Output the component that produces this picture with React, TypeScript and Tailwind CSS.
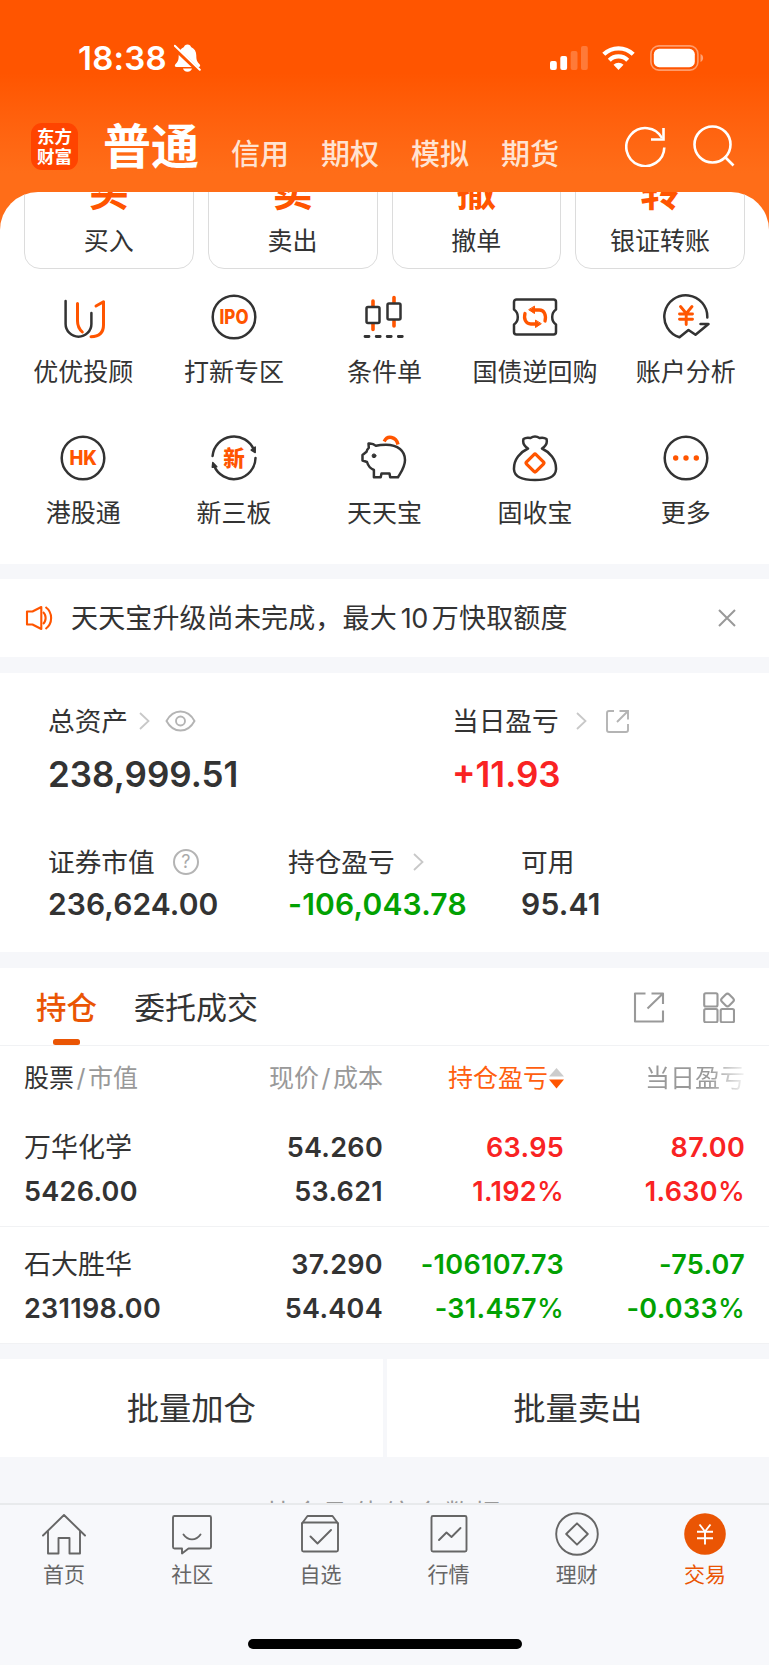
import type { ReactNode } from "react";

const quickActions = [
  { glyph: "买", label: "买入" },
  { glyph: "卖", label: "卖出" },
  { glyph: "撤", label: "撤单" },
  { glyph: "转", label: "银证转账" },
];

const accountTabs = ["信用", "期权", "模拟", "期货"];

const DARK = "#333333";
const ORANGE = "#ff5500";

function ServiceIcon({ children }: { children: ReactNode }) {
  return (
    <svg
      className="size-12"
      viewBox="0 0 48 48"
      fill="none"
      stroke={DARK}
      strokeWidth="2.5"
      strokeLinecap="round"
      strokeLinejoin="round"
      aria-hidden="true"
    >
      {children}
    </svg>
  );
}

const services: { label: string; icon: ReactNode }[] = [
  {
    label: "优优投顾",
    icon: (
      <>
        <path d="M6.6 8v23a12.900 12.700 0 0 0 25.800 0V20" />
        <path d="M18.500 10.500V28c0 4.500 1.500 8 4.800 11" stroke={ORANGE} strokeWidth="3" />
        <path d="M37 13l7.500-4.200V32c0 7-4 11.500-12.500 11.700" stroke={ORANGE} strokeWidth="3" />
      </>
    ),
  },
  {
    label: "打新专区",
    icon: (
      <>
        <circle cx="24" cy="24" r="21.300" />
        <text x="9.500" y="31" textLength="29" lengthAdjust="spacingAndGlyphs" fontSize="19.500" fontWeight="800" fill={ORANGE} stroke="none">
          IPO
        </text>
      </>
    ),
  },
  {
    label: "条件单",
    icon: (
      <>
        <path d="M13 8v5M13 31v5.500M34 4.500v5M34 28v5" stroke={ORANGE} strokeWidth="3.600" />
        <rect x="6.500" y="14" width="13" height="16" rx="1.500" />
        <rect x="27.500" y="10.500" width="13" height="16" rx="1.500" />
        <path d="M5 43.500h4M16.200 43.500h4M27.200 43.500h4M38.300 43.500h4" strokeWidth="2.800" />
      </>
    ),
  },
  {
    label: "国债逆回购",
    icon: (
      <>
        <path d="M5.500 6.500h37a2.500 2.500 0 0 1 2.500 2.500v7.500a9 9 0 0 0-3.800 7.500 9 9 0 0 0 3.800 7.500V39a2.500 2.500 0 0 1-2.500 2.500h-37A2.500 2.500 0 0 1 3 39v-7.500a9 9 0 0 0 3.800-7.500A9 9 0 0 0 3 16.500V9a2.500 2.500 0 0 1 2.500-2.500z" />
        <path d="M14 20.500c-1.500 5.500.8 10.500 5.800 10.500h5.700M34 28c1.500-6-.8-11-5.800-11h-5.700" stroke={ORANGE} strokeWidth="3.300" />
        <path d="M23.500 13.500v7l-5.500-3.600zM24.500 27.500v7l5.500-3.600z" fill={ORANGE} stroke={ORANGE} strokeWidth="1" />
      </>
    ),
  },
  {
    label: "账户分析",
    icon: (
      <>
        <path d="M45.300 24.500A21.500 21.500 0 1 0 17.500 44.300L26.500 37l7 4.800L46.500 31H38.500" />
        <path d="M18.500 13.500l5.800 7 5.700-7M17.500 21h13M17.500 26.300h13M24.200 21v10.500" stroke={ORANGE} strokeWidth="2.900" />
      </>
    ),
  },
  {
    label: "港股通",
    icon: (
      <>
        <circle cx="24" cy="24" r="21.300" />
        <text x="10.500" y="31.200" textLength="27.500" lengthAdjust="spacingAndGlyphs" fontSize="20" fontWeight="800" fill={ORANGE} stroke="none">
          HK
        </text>
      </>
    ),
  },
  {
    label: "新三板",
    icon: (
      <>
        <path d="M2.600 22A21.500 21.500 0 0 1 44 16" />
        <path d="M45.500 24A21.500 21.500 0 0 1 4 31.500" />
        <path d="M45.200 13v5.500l-4-2.500zM2.800 28.500l4 4.200-4.500.5z" fill={DARK} strokeWidth="1.500" />
        <text x="24" y="31.500" textAnchor="middle" fontSize="21.500" fontWeight="800" fill={ORANGE} stroke="none">
          新
        </text>
      </>
    ),
  },
  {
    label: "天天宝",
    icon: (
      <>
        <path d="M8.500 9.500c3-.3 5.200.2 7.500 2.300 3-.8 6-1 10-1C38 10.800 45 17 45 26c0 7-3.500 11.500-7 17.300h-7.800l-.7-3.800h-8l-.8 3.800h-6.800v-7.300C9.700 34.200 8 31.500 7 28l-4.500-1.500V21l4-3.200c.3-1.600 1-2.800 2.300-3.900z" />
        <circle cx="14" cy="21.800" r="1.900" fill={DARK} strokeWidth="1" />
        <path d="M24.200 7.500c3.200-6.800 12-4.800 13.800 3" stroke={ORANGE} strokeWidth="3.400" strokeLinecap="butt" />
      </>
    ),
  },
  {
    label: "固收宝",
    icon: (
      <>
        <path d="M17 14.500c-3.800-2.500-5.500-6-4.500-9.500 2-1.500 4.500-1.500 7-1 2.700-1.900 6.300-1.900 9 0 2.500-.5 5-.5 7 1 1 3.500-.7 7-4.500 9.500 7.500 3.500 14.500 11 14 21C44.500 43.500 35 46 24 46S3.500 43.500 3 35.500c-.5-10 6.500-17.500 14-21" />
        <rect x="17.300" y="22.300" width="13.400" height="13.400" rx="1.500" transform="rotate(45 24 29)" stroke={ORANGE} strokeWidth="3.200" />
      </>
    ),
  },
  {
    label: "更多",
    icon: (
      <>
        <circle cx="24" cy="24" r="21.300" />
        <g fill={ORANGE} stroke="none">
          <circle cx="13.700" cy="24" r="2.700" />
          <circle cx="24" cy="24" r="2.700" />
          <circle cx="34.300" cy="24" r="2.700" />
        </g>
      </>
    ),
  },
];

const holdings = [
  {
    name: "万华化学",
    marketValue: "5426.00",
    price: "54.260",
    cost: "53.621",
    profit: "63.95",
    profitRate: "1.192",
    dayProfit: "87.00",
    dayRate: "1.630",
    up: true,
  },
  {
    name: "石大胜华",
    marketValue: "231198.00",
    price: "37.290",
    cost: "54.404",
    profit: "-106107.73",
    profitRate: "-31.457",
    dayProfit: "-75.07",
    dayRate: "-0.033",
    up: false,
  },
];

const bottomTabs: { label: string; icon: ReactNode }[] = [
  {
    label: "首页",
    icon: <path d="M3 24.500L24 4l21 20.500M8 20v22.500h10.500V27h11v15.500H40V20" />,
  },
  {
    label: "社区",
    icon: (
      <>
        <path d="M6.500 5h35a1.500 1.500 0 0 1 1.500 1.500v29.500a1.500 1.500 0 0 1-1.500 1.500H20.500L14 42.500v-5H6.500A1.500 1.500 0 0 1 5 36V6.500A1.500 1.500 0 0 1 6.500 5z" />
        <path d="M15.500 23.500c4.500 6.500 12.500 6.500 17 0" />
      </>
    ),
  },
  {
    label: "自选",
    icon: (
      <>
        <rect x="6" y="11.500" width="36" height="29" rx="1.500" />
        <path d="M6 12.500L11.500 5h25l5.500 7.500M14.500 25.500l7 7L35 19" />
      </>
    ),
  },
  {
    label: "行情",
    icon: (
      <>
        <rect x="6.500" y="5" width="35" height="35.500" rx="1.500" />
        <path d="M14 29l7.500-7.500 5 4.500 9-9" />
      </>
    ),
  },
  {
    label: "理财",
    icon: (
      <>
        <circle cx="24" cy="23" r="20.800" />
        <path d="M24 12.300L34.800 23 24 33.700 13.200 23z" />
      </>
    ),
  },
  {
    label: "交易",
    icon: (
      <>
        <circle cx="24" cy="23" r="20.800" fill="#ea5504" stroke="none" />
        <path d="M18.500 13.500L24 20.500l5.500-7M16 20.800h16M16 27.300h16M24 20.500v13" stroke="#ffffff" strokeWidth="1.900" strokeLinecap="butt" />
      </>
    ),
  },
];

function StatusBar() {
  return (
    <div className="flex h-[115px] items-center pl-[78px] pr-[65px] text-white">
      <span className="text-[33px] leading-10 font-semibold tracking-[0.2px]">18:38</span>
      <svg className="ml-[7px] h-[28px] w-[27px]" viewBox="0 0 27 28" fill="none" aria-hidden="true">
        <path
          d="M13.500 0.500c2 0 3.200 1 3.500 2.500 3.500 1.500 5.300 4.500 5.300 8.500 0 5 1 6.500 3.500 9 .8 1.200.3 2.500-1.300 2.500H2.500c-1.600 0-2.100-1.300-1.300-2.500 2.500-2.500 3.500-4 3.500-9 0-4 1.800-7 5.300-8.500.3-1.500 1.500-2.500 3.500-2.500zM9 24.500h9c-.5 2-2 3.200-4.500 3.200S9.500 26.500 9 24.500z"
          fill="#ffffff"
        />
        <path d="M0 3.500L25 27" stroke={ORANGE} strokeWidth="4.500" />
        <path d="M0.800 1.800L25.800 25.800" stroke="#ffffff" strokeWidth="2" strokeLinecap="round" />
      </svg>

      <div className="ml-auto flex items-center">
        <svg className="h-6 w-[38px]" viewBox="0 0 38 24" fill="#ffffff" aria-hidden="true">
          <rect x="0" y="15" width="6.800" height="9" rx="2" />
          <rect x="10.300" y="10" width="6.800" height="14" rx="2" />
          <rect x="20.700" y="5" width="6.800" height="19" rx="2" opacity="0.220" />
          <rect x="31" y="0" width="6.800" height="24" rx="2" opacity="0.220" />
        </svg>
        <svg className="ml-[14px] h-6 w-[33px]" viewBox="0 0 33 24" fill="none" stroke="#ffffff" strokeWidth="4.300" aria-hidden="true">
          <path d="M1.800 8.300a21 21 0 0 1 29.400 0" />
          <path d="M7.300 14.200a13.200 13.200 0 0 1 18.400 0" />
          <path d="M16.500 24l-5-5.200a7.200 7.200 0 0 1 10 0z" fill="#ffffff" stroke="none" />
        </svg>
        <svg className="ml-[15px] h-[26px] w-[54px]" viewBox="0 0 54 26" fill="none" aria-hidden="true">
          <rect x="0.900" y="0.900" width="47" height="24.200" rx="8" stroke="#ffffff" strokeOpacity="0.420" strokeWidth="1.600" />
          <rect x="3.800" y="3.800" width="41" height="18.400" rx="5.500" fill="#ffffff" />
          <path d="M50.500 9v8c1.800-.7 2.600-2.300 2.600-4s-.8-3.300-2.600-4z" fill="#ffffff" fillOpacity="0.450" />
        </svg>
      </div>
    </div>
  );
}

function AppHeader() {
  return (
    <header className="h-[192px] bg-linear-to-b from-[#ff5500] from-38% to-[#ff6d18] to-90%">
      <StatusBar />
      <div className="flex items-start pl-[31px] pr-[34px]">
        <div className="mt-[8px] grid size-[47px] content-center justify-center rounded-[11px] bg-[#ff4400] text-center text-[17.500px] leading-[19.500px] font-bold text-white">
          <span>东方</span>
          <span>财富</span>
        </div>
        <h1 className="ml-[25px] pt-px text-[48px] leading-[62px] font-bold text-white">普通</h1>
        <nav className="ml-[32px] flex gap-[32px] pt-[22px]">
          {accountTabs.map((tab) => (
            <span key={tab} className="text-[29px] leading-9 font-medium text-[#ffe3d2]">
              {tab}
            </span>
          ))}
        </nav>
        <div className="ml-auto flex gap-[26px] pt-[10px]">
          <svg className="size-[42px]" viewBox="0 0 42 42" fill="none" stroke="#ffffff" strokeWidth="2.600" aria-hidden="true">
            <path d="M39.300 22.500A19 19 0 1 1 37 13" />
            <path d="M38.500 3v11.500H26" />
          </svg>
          <svg className="size-[42px]" viewBox="0 0 42 42" fill="none" stroke="#ffffff" strokeWidth="2.600" aria-hidden="true">
            <circle cx="19.500" cy="19.500" r="18" />
            <path d="M31.500 31.500l9 9" />
          </svg>
        </div>
      </div>
    </header>
  );
}

function ServicePanel() {
  return (
    <div className="bg-[#ff6d18]">
      <section className="h-[372px] overflow-hidden rounded-t-[38px] bg-white">
        <div className="-mt-[30px] grid grid-cols-4 gap-[14px] px-6">
          {quickActions.map((action) => (
            <div
              key={action.label}
              className="flex h-[107px] flex-col items-center rounded-[16px] border-[1.500px] border-[#dcdcdc] pt-[7px]"
            >
              <span className="text-[40px] leading-[44px] font-bold text-[#ff5500]">{action.glyph}</span>
              <span className="mt-[11px] text-[25px] leading-8 text-[#333]">{action.label}</span>
            </div>
          ))}
        </div>
        <div className="mt-[24px] grid grid-cols-5 px-2">
          {services.map((service) => (
            <div key={service.label} className="flex h-[141px] flex-col items-center">
              <ServiceIcon>{service.icon}</ServiceIcon>
              <span className="mt-[15px] text-[25px] leading-8 text-[#333]">{service.label}</span>
            </div>
          ))}
        </div>
      </section>
    </div>
  );
}

function Notice() {
  return (
    <section className="mt-[15px] flex h-[78px] items-center bg-white pl-[25px] pr-[33px]">
      <svg className="h-[26px] w-[28px]" viewBox="0 0 28 26" fill="none" stroke={ORANGE} strokeWidth="2.100" strokeLinejoin="round" aria-hidden="true">
        <path d="M2 6.500h5.500L16.300 2v22L7.500 19.500H2z" />
        <path d="M18 7c3.500 3 3.500 9 0 12M20.500 2c7.500 5.500 7.500 16.500 0 22" />
      </svg>
      <p className="ml-[18px] pt-[2px] text-[27px] leading-9 tracking-[0.150px] text-[#333]">
        天天宝升级尚未完成，最大<span className="mx-[4px] tracking-[-0.500px]">10</span>万快取额度
      </p>
      <svg className="ml-auto size-[18px]" viewBox="0 0 18 18" fill="none" stroke="#999999" strokeWidth="2" aria-hidden="true">
        <path d="M1 1l16 16M17 1L1 17" />
      </svg>
    </section>
  );
}

function Chevron() {
  return (
    <svg className="h-[18px] w-[11px]" viewBox="0 0 11 18" fill="none" stroke="#c8c8c8" strokeWidth="1.800" aria-hidden="true">
      <path d="M1 1l8.500 8L1 17" />
    </svg>
  );
}

function AssetSummary() {
  return (
    <section className="mt-4 h-[279px] bg-white px-12 text-[#333]">
      <div className="flex pt-[29px]">
        <div className="w-[404px]">
          <div className="flex h-[38px] items-center text-[26.700px] leading-[38px]">
            <span className="mr-[11px]">总资产</span>
            <Chevron />
            <svg className="ml-[15px] h-[22px] w-[31px]" viewBox="0 0 31 22" fill="none" stroke="#b4b4b4" strokeWidth="1.900" aria-hidden="true">
              <path d="M1.500 11C5 4.500 10 1.500 15.500 1.500S26 4.500 29.500 11C26 17.500 21 20.500 15.500 20.500S5 17.500 1.500 11z" />
              <circle cx="15.500" cy="11" r="4.500" />
            </svg>
          </div>
          <div className="mt-[12px] text-[35px] leading-[44px] font-semibold">238,999.51</div>
        </div>
        <div>
          <div className="flex h-[38px] items-center text-[26.700px] leading-[38px]">
            <span className="mr-[17px]">当日盈亏</span>
            <Chevron />
            <svg className="ml-[18px] size-6" viewBox="0 0 24 24" fill="none" stroke="#b4b4b4" strokeWidth="1.900" aria-hidden="true">
              <path d="M9 2H4a2 2 0 0 0-2 2v17a2 2 0 0 0 2 2h17a2 2 0 0 0 2-2v-6M14.500 2h8.500v8.500M23 2L12 13" />
            </svg>
          </div>
          <div className="mt-[12px] text-[35px] leading-[44px] font-semibold text-[#f92323]">+11.93</div>
        </div>
      </div>

      <div className="mt-[47px] flex">
        <div className="w-[240px]">
          <div className="flex h-[38px] items-center text-[26.700px] leading-[38px]">
            <span>证券市值</span>
            <span className="ml-[18px] grid size-[26px] place-items-center rounded-full border-2 border-[#b4b4b4] text-[18px] leading-[22px] text-[#aaa]">
              ?
            </span>
          </div>
          <div className="mt-[4px] text-[30px] leading-[38px] font-semibold tracking-[0.100px]">236,624.00</div>
        </div>
        <div className="w-[233px]">
          <div className="flex h-[38px] items-center text-[26.700px] leading-[38px]">
            <span className="mr-[18px]">持仓盈亏</span>
            <Chevron />
          </div>
          <div className="mt-[4px] text-[30px] leading-[38px] font-semibold tracking-[0.200px] text-[#02a102]">-106,043.78</div>
        </div>
        <div>
          <div className="text-[26.700px] leading-[38px]">可用</div>
          <div className="mt-[4px] text-[30px] leading-[38px] font-semibold tracking-[0.200px]">95.41</div>
        </div>
      </div>
    </section>
  );
}

function HoldingTabs() {
  return (
    <div className="flex h-[78px] items-start border-b-[1.500px] border-[#f1f2f4] pl-9 pr-[34px]">
      <div className="flex h-[77px] flex-col items-center justify-between pt-[20px]">
        <span className="text-[30.500px] leading-10 font-medium text-[#ea5504]">持仓</span>
        <span className="h-[6px] w-[27px] rounded-[2.500px] bg-[#ea5504]" />
      </div>
      <span className="ml-[37px] pt-[20px] text-[31px] leading-10 text-[#333]">委托成交</span>
      <div className="ml-auto flex gap-[38px] pt-[23px]">
        <svg className="size-8" viewBox="0 0 32 32" fill="none" stroke="#999999" strokeWidth="2.100" strokeLinejoin="round" aria-hidden="true">
          <path d="M12.500 2.500H2V30.500H30V19.500M18.500 2.500H30V13M30 2.500L14.500 17.500" />
        </svg>
        <svg className="size-8" viewBox="0 0 32 32" fill="none" stroke="#999999" strokeWidth="2.100" aria-hidden="true">
          <rect x="1.200" y="2.200" width="13.300" height="13.300" rx="1.500" />
          <rect x="1.200" y="18" width="13.300" height="13.300" rx="1.500" />
          <rect x="17.700" y="18" width="13.300" height="13.300" rx="1.500" />
          <rect x="19.400" y="3.900" width="10.300" height="10.300" rx="2.500" transform="rotate(45 24.500 9)" />
        </svg>
      </div>
    </div>
  );
}

function ValuePair({ top, rate, up }: { top: string; rate: string; up: boolean }) {
  return (
    <div className={up ? "text-right text-[#f92323]" : "text-right text-[#02a102]"}>
      <div>{top}</div>
      <div>
        {rate}
        <span className="font-medium">%</span>
      </div>
    </div>
  );
}

function HoldingsTable() {
  return (
    <div className="text-[#333]">
      <div className="grid h-[64px] grid-cols-[160px_199px_181px_181px] items-center px-6 text-[25px] leading-9 text-[#999]">
        <span>
          <span className="text-[#333]">股票</span>
          <span className="mx-[2.500px]">/</span>市值
        </span>
        <span className="text-right">
          现价<span className="mx-[2.500px]">/</span>成本
        </span>
        <span className="flex items-center justify-end text-[#ff5f0f]">
          持仓盈亏
          <svg className="ml-px h-[22px] w-[15px]" viewBox="0 0 15 22" aria-hidden="true">
            <path d="M7.500 1L15 9.500H0z" fill="#cccccc" />
            <path d="M7.500 21.500L15 12.500H0z" fill={ORANGE} />
          </svg>
        </span>
        <span className="bg-linear-to-r from-[#999] from-80% to-[#f4f4f4] bg-clip-text text-right text-transparent">当日盈亏</span>
      </div>
      {holdings.map((item) => (
        <div
          key={item.name}
          className="grid h-[117px] grid-cols-[160px_199px_181px_181px] border-b-[1.500px] border-[#f1f2f4] px-6 pt-[16px] text-[27px] leading-[44px] font-semibold tracking-[0.300px] whitespace-nowrap"
        >
          <div>
            <div className="font-normal tracking-normal">{item.name}</div>
            <div>{item.marketValue}</div>
          </div>
          <div className="text-right">
            <div>{item.price}</div>
            <div>{item.cost}</div>
          </div>
          <ValuePair top={item.profit} rate={item.profitRate} up={item.up} />
          <ValuePair top={item.dayProfit} rate={item.dayRate} up={item.up} />
        </div>
      ))}
    </div>
  );
}

function BottomNav() {
  return (
    <nav className="h-[162px] border-t-2 border-[#e8eaec] bg-[#f7f8fb]">
      <div className="grid grid-cols-6 pt-[6px]">
        {bottomTabs.map((tab) => (
          <div key={tab.label} className="flex flex-col items-center">
            <svg
              className="size-12"
              viewBox="0 0 48 48"
              fill="none"
              stroke="#666666"
              strokeWidth="1.900"
              strokeLinecap="round"
              strokeLinejoin="round"
              aria-hidden="true"
            >
              {tab.icon}
            </svg>
            <span className={tab.label === "交易" ? "text-[21px] leading-8 text-[#ea5504]" : "text-[21px] leading-8 text-[#666]"}>
              {tab.label}
            </span>
          </div>
        ))}
      </div>
      <div className="mx-auto mt-[48px] h-[10px] w-[274px] rounded-full bg-black" />
    </nav>
  );
}

export default function App() {
  return (
    <div className="flex h-[1665px] w-[769px] flex-col overflow-hidden bg-[#f6f7fa] [font-family:Inter,'Noto_Sans_CJK_SC',sans-serif]">
      <AppHeader />
      <ServicePanel />
      <Notice />
      <AssetSummary />
      <section className="mt-4 bg-white">
        <HoldingTabs />
        <HoldingsTable />
      </section>
      <div className="mt-[15px] grid h-[98px] shrink-0 grid-cols-2 gap-[4px] text-center text-[32.300px] leading-[100px] text-[#333]">
        <button className="overflow-hidden bg-white" type="button">批量加仓</button>
        <button className="overflow-hidden bg-white" type="button">批量卖出</button>
      </div>
      <div className="h-[46px] shrink-0 overflow-hidden pt-[43px] text-center text-[26px] leading-[28px] tracking-[4px] text-[#999]">
        基金及债综合数据
      </div>
      <BottomNav />
    </div>
  );
}
